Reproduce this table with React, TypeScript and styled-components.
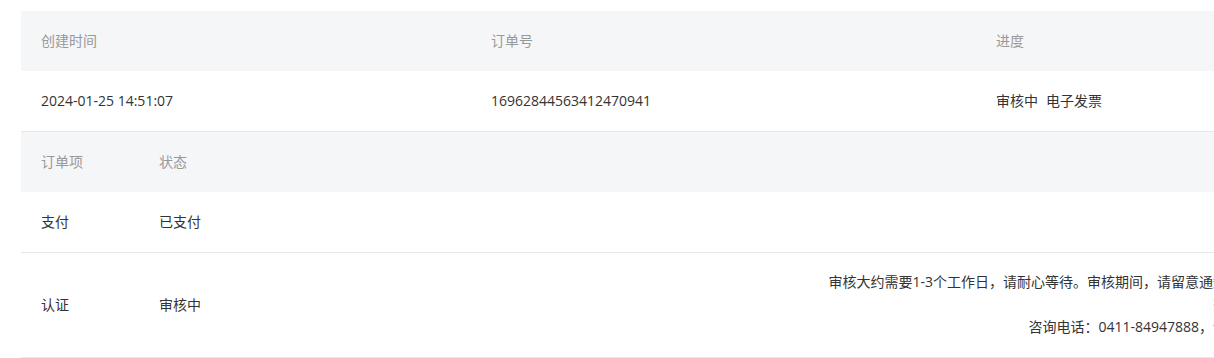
import React from "react";
import styled, { createGlobalStyle } from "styled-components";

const GlobalStyle = createGlobalStyle`
  html, body {
    margin: 0;
    padding: 0;
    overflow: hidden;
    background: #fff;
  }
  body {
    font-family: "Open Sans", "Noto Sans CJK SC", sans-serif;
    font-size: 14px;
    color: #333;
  }
`;

const Page = styled.div`
  padding: 11px 0 0 21px;
`;

const Table = styled.div`
  width: 1242px;
`;

const Row = styled.div<{ $cols: string; $head?: boolean; $height?: number }>`
  display: grid;
  grid-template-columns: ${(p) => p.$cols};
  align-items: center;
  min-height: ${(p) => p.$height || 60}px;
  background: ${(p) => (p.$head ? "#f5f6f8" : "#fff")};
  color: ${(p) => (p.$head ? "#999" : "#333")};
  border-bottom: ${(p) => (p.$head ? "none" : "1px solid #e8e8e8")};
`;

const Cell = styled.div<{ $right?: boolean }>`
  padding: 0 ${(p) => (p.$right ? 22 : 20)}px 0 20px;
  line-height: 20px;
  white-space: nowrap;
  text-align: ${(p) => (p.$right ? "right" : "left")};
`;

const Spaced = styled.span`
  margin-right: 8px;
`;

const Note = styled.div`
  line-height: 22.5px;
`;

const Link = styled(Note)`
  color: #e6891e;
`;

const mainCols = "450px 505px 1fr";
const itemCols = "118px 1fr 1fr";

export default function App() {
  return (
    <Page>
      <GlobalStyle />
      <Table>
        <Row $cols={mainCols} $head>
          <Cell>创建时间</Cell>
          <Cell>订单号</Cell>
          <Cell>进度</Cell>
        </Row>
        <Row $cols={mainCols}>
          <Cell>2024-01-25 14:51:07</Cell>
          <Cell>16962844563412470941</Cell>
          <Cell>
            <Spaced>审核中</Spaced>电子发票
          </Cell>
        </Row>
      </Table>
      <Table>
        <Row $cols={itemCols} $head>
          <Cell>订单项</Cell>
          <Cell>状态</Cell>
          <Cell />
        </Row>
        <Row $cols={itemCols}>
          <Cell>支付</Cell>
          <Cell>已支付</Cell>
          <Cell />
        </Row>
        <Row $cols={itemCols} $height={104}>
          <Cell>认证</Cell>
          <Cell>审核中</Cell>
          <Cell $right>
            <Note>审核大约需要1-3个工作日，请耐心等待。审核期间，请留意通知。</Note>
            <Link>查看</Link>
            <Note>咨询电话：0411-84947888，谢谢</Note>
          </Cell>
        </Row>
      </Table>
    </Page>
  );
}
